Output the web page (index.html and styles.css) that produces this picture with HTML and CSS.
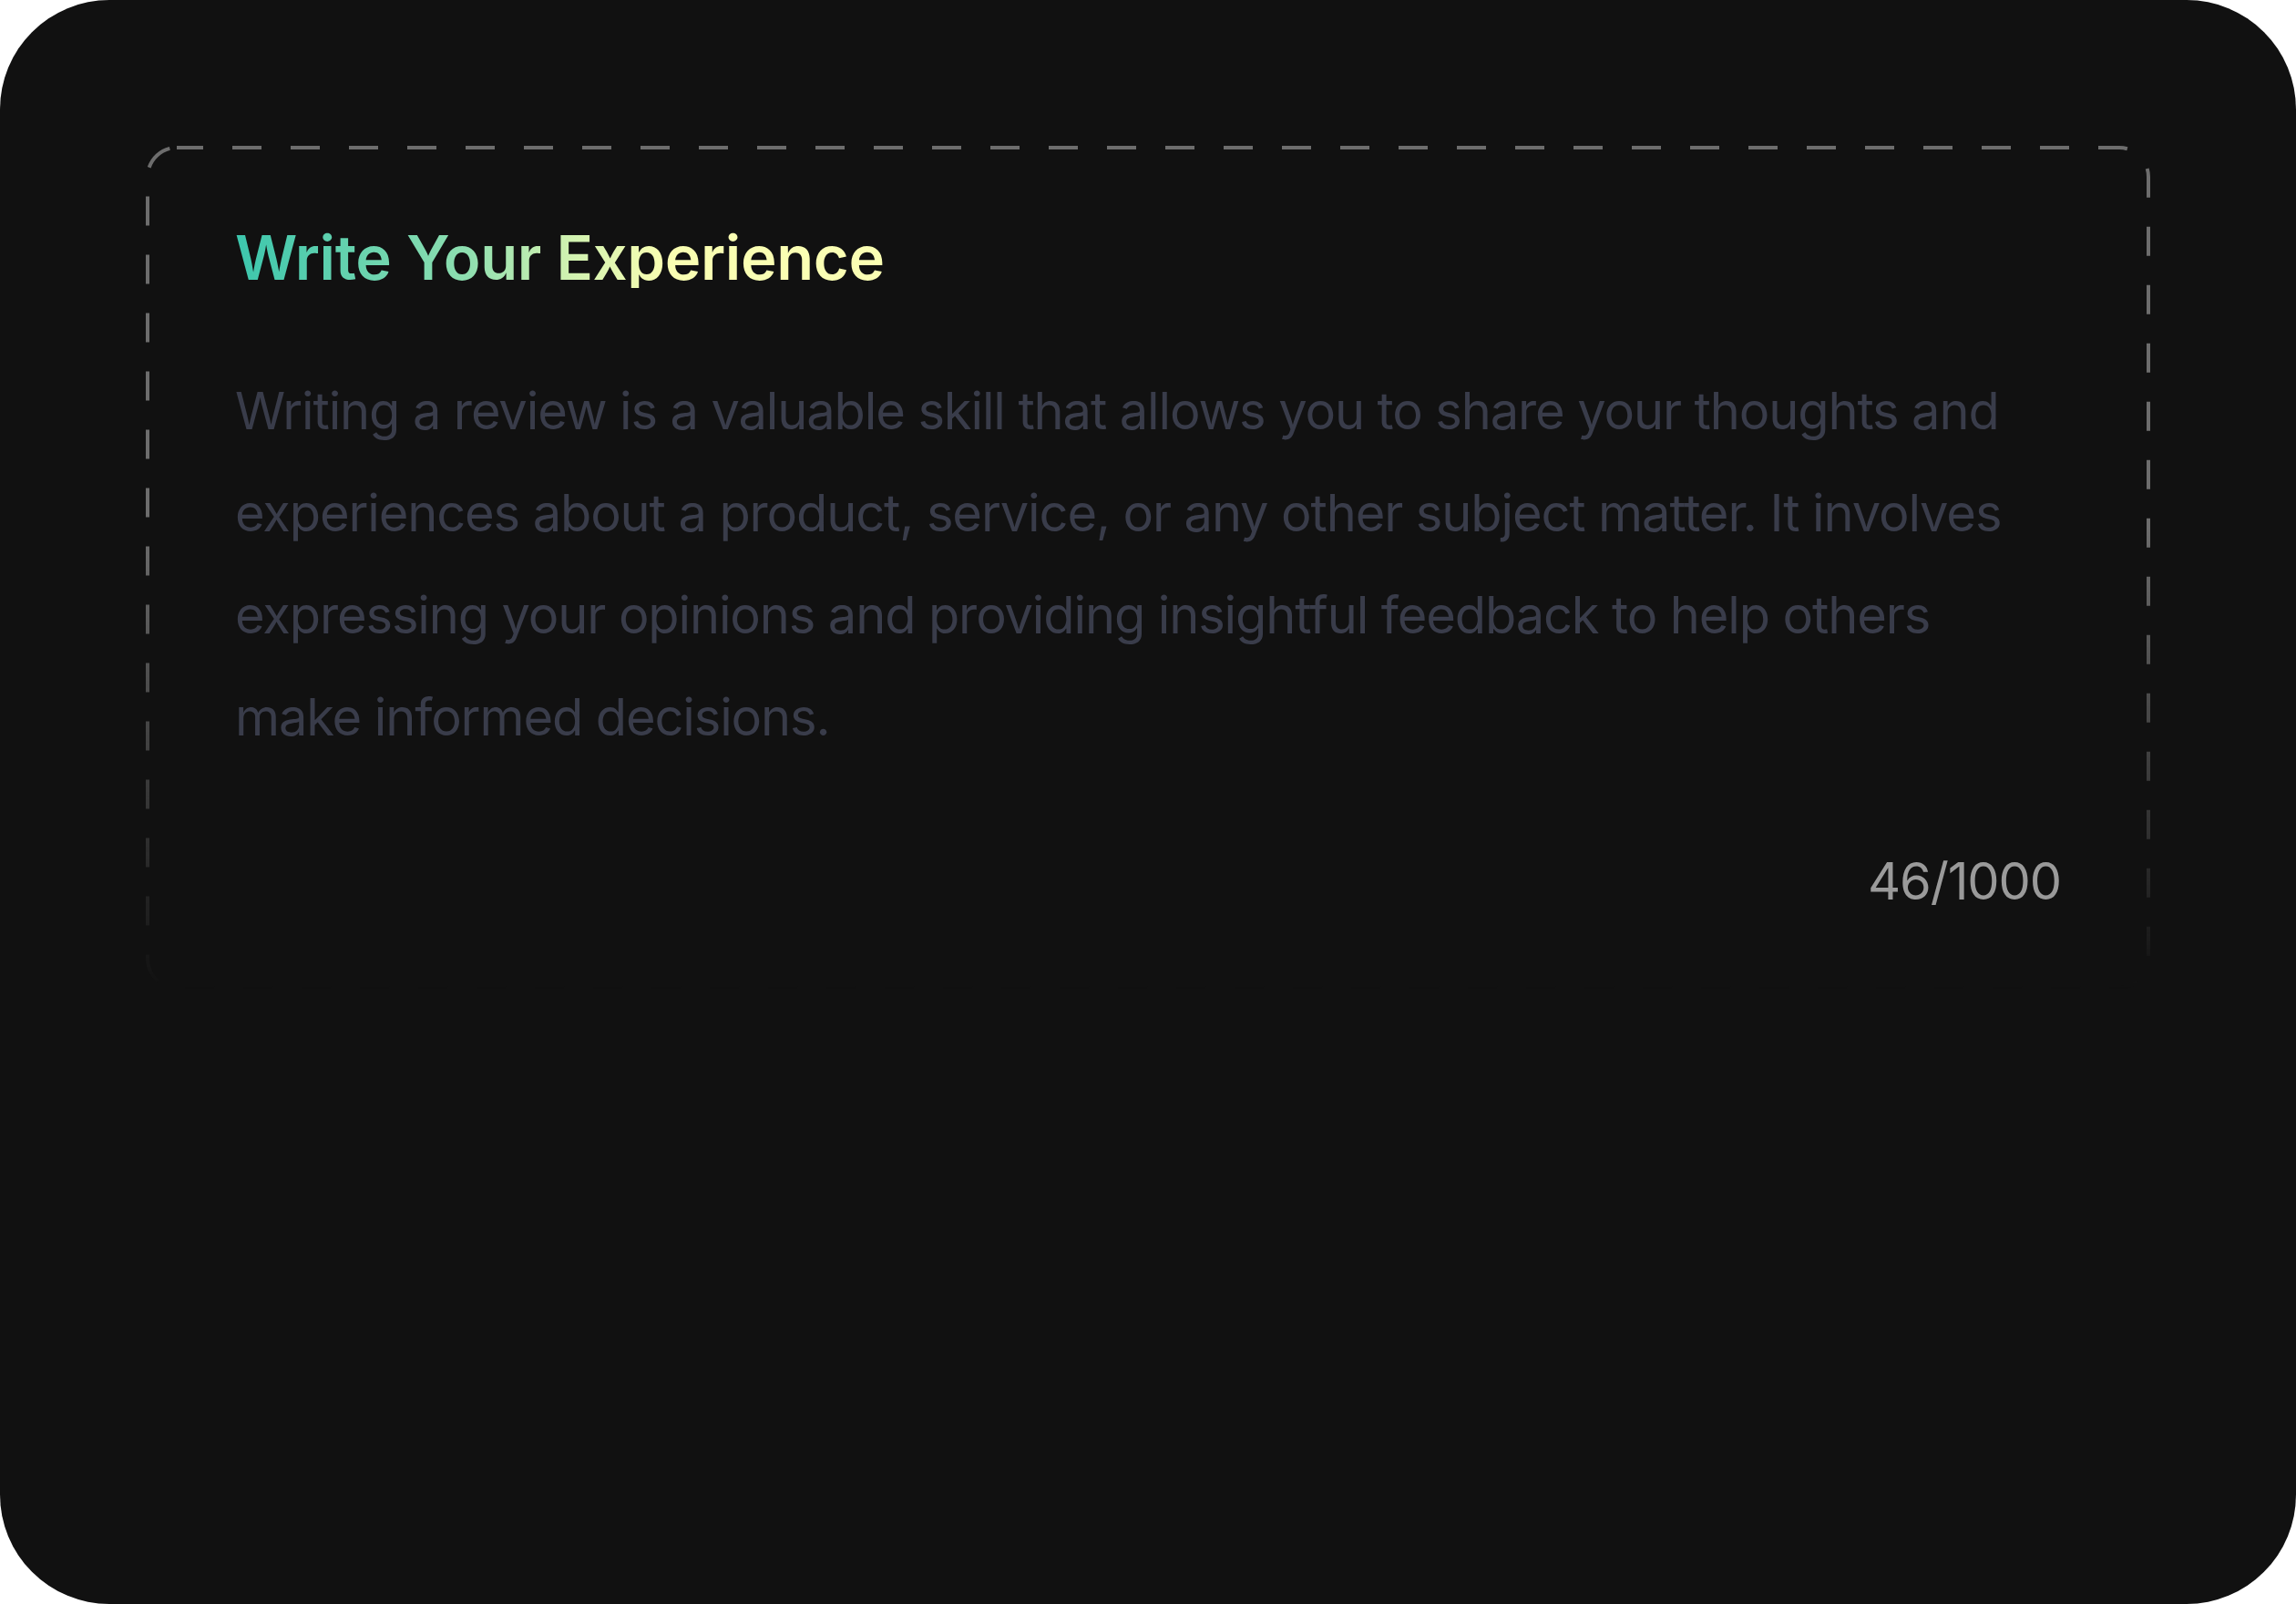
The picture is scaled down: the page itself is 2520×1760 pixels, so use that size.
FILE: index.html
```html
<!DOCTYPE html>
<html lang="en">
<head>
<meta charset="utf-8">
<title>Write Your Experience</title>
<link rel="stylesheet" href="styles.css">
</head>
<body>
<div class="card">
  <section class="box">
    <svg class="dash" aria-hidden="true"><rect class="dash-rect" rx="32" ry="32"/></svg>
    <h1 class="title">Write Your Experience</h1>
    <p class="text">Writing a review is a valuable skill that allows you to share your thoughts and experiences about a product, service, or any other subject matter. It involves expressing your opinions and providing insightful feedback to help others make informed decisions.</p>
    <div class="count">46/1000</div>
  </section>
</div>
</body>
</html>
```
FILE: styles.css
```css
html, body {
  margin: 0;
  padding: 0;
  background: #ffffff;
}
.card {
  width: 2520px;
  height: 1760px;
  box-sizing: border-box;
  background: #111111;
  border-radius: 120px;
  padding: 162px 162px 0 162px;
  font-family: "Inter", "Liberation Sans", sans-serif;
}
.box {
  position: relative;
  display: flex;
  flex-direction: column;
  padding: 87px 96px 83px 96px;
}
.dash {
  position: absolute;
  left: -2px;
  top: -2px;
  width: calc(100% + 4px);
  height: calc(100% + 4px);
  -webkit-mask-image: linear-gradient(to bottom, #000 45%, transparent 100%);
  mask-image: linear-gradient(to bottom, #000 45%, transparent 100%);
  pointer-events: none;
}
.dash-rect {
  x: 2px;
  y: 2px;
  width: calc(100% - 4px);
  height: calc(100% - 4px);
  fill: none;
  stroke: #6d6d6d;
  stroke-width: 4;
  stroke-dasharray: 32 32;
  stroke-dashoffset: 3;
}
.title {
  align-self: flex-start;
  margin: 0;
  font-size: 67px;
  font-weight: 600;
  line-height: 1;
  letter-spacing: -0.4px;
  background: linear-gradient(90deg, #3cc6ad 0%, #8fdfb0 36%, #c6efb0 48%, #f9feb2 66%, #fbffb4 100%);
  -webkit-background-clip: text;
  background-clip: text;
  color: transparent;
}
.text {
  margin: 79px 0 0 0;
  font-size: 56px;
  line-height: 112px;
  font-weight: 400;
  letter-spacing: -0.02em;
  color: #393c4a;
}
.count {
  margin-top: 90px;
  text-align: right;
  font-size: 56px;
  line-height: 68px;
  letter-spacing: -0.02em;
  color: #9a9a9a;
}
```
